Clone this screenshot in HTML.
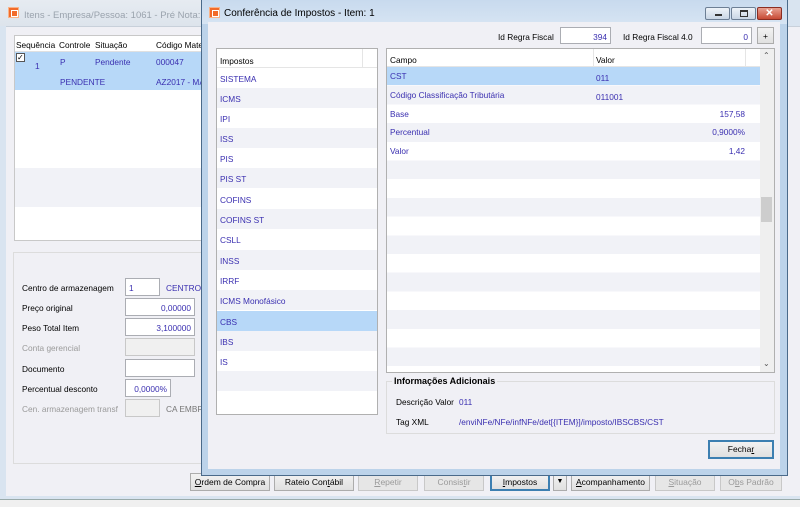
<!DOCTYPE html>
<html><head><meta charset="utf-8"><style>
*{box-sizing:border-box;margin:0;padding:0}
body{width:800px;height:507px;overflow:hidden;background:#f0f0f0;font-family:"Liberation Sans",sans-serif;font-size:8.3px;color:#000;position:relative}
.a{position:absolute}
.blue{color:#3a2fb0}
.ico{position:absolute;width:11px;height:11px;background:#f26b2a;border:1px solid #f8b48a}
.ico:after{content:"";position:absolute;left:2px;top:2px;width:5px;height:5px;border:1px solid #fff}
.inp{position:absolute;background:#fff;border:1px solid #abadb3;height:18px;padding:4px 3px;text-align:right;color:#3a2fb0}
.dis{background:#f0f0f0;border-color:#c8c8c8}
.btn{position:absolute;height:18px;border:1px solid #acacac;background:linear-gradient(#f2f2f2,#e0e0e0);text-align:center;line-height:16px;font-size:8.5px}
.btn.d{color:#9a9a9a;background:#e6e6e6;border-color:#c8c8c8}
.row{position:absolute;left:0;right:0;height:20px;padding:6px 3px;color:#3a2fb0}
</style></head><body>
<div class="a" style="left:0;top:0;width:800px;height:500px;background:#d9e4f0;border-bottom:1px solid #9aa"></div>
<div class="a" style="left:0;top:0;width:210px;height:26px;background:linear-gradient(#e6ebf1,#dde4ec)"></div>
<div class="ico" style="left:8px;top:7px"></div>
<div class="a" style="left:24px;top:10px;color:#9aa3ad;font-size:9.5px;white-space:nowrap">Itens - Empresa/Pessoa: 1061 - Pré Nota: 37</div>
<div class="a" style="left:6px;top:26px;width:794px;height:470px;background:#f0f0f5;border-top:1px solid #c8d0da"></div>
<div class="a" style="left:14px;top:35px;width:190px;height:206px;background:#fff;border:1px solid #c8c8c8"></div>
<div class="a" style="left:15px;top:36px;width:188px;height:16px;background:#fff;border-bottom:1px solid #e0e0e0"></div>
<div class="a" style="left:16px;top:40px;white-space:nowrap">Sequência</div>
<div class="a" style="left:59px;top:40px">Controle</div>
<div class="a" style="left:95px;top:40px">Situação</div>
<div class="a" style="left:156px;top:40px;white-space:nowrap">Código Mate</div>
<div class="a" style="left:15px;top:52px;width:188px;height:38px;background:#b7d8f8"></div>
<div class="a" style="left:16px;top:53px;width:9px;height:9px;border:1px solid #555;background:#fff;font-size:8px;line-height:7px">✓</div>
<div class="a blue" style="left:35px;top:61px">1</div>
<div class="a blue" style="left:60px;top:57px">P</div>
<div class="a blue" style="left:95px;top:57px">Pendente</div>
<div class="a blue" style="left:156px;top:57px">000047</div>
<div class="a blue" style="left:60px;top:77px">PENDENTE</div>
<div class="a blue" style="left:156px;top:77px;white-space:nowrap">AZ2017 - MA</div>
<div class="a" style="left:15px;top:168px;width:188px;height:39px;background:#f1f2f7"></div>
<div class="a" style="left:13px;top:252px;width:200px;height:212px;border:1px solid #dcdcdc"></div>
<div class="a" style="left:22px;top:283px">Centro de armazenagem</div>
<div class="inp" style="left:125px;top:278px;width:35px;text-align:left">1</div>
<div class="a blue" style="left:166px;top:283px">CENTRO</div>
<div class="a" style="left:22px;top:303px">Preço original</div>
<div class="inp" style="left:125px;top:298px;width:70px">0,00000</div>
<div class="a" style="left:22px;top:323px">Peso Total Item</div>
<div class="inp" style="left:125px;top:318px;width:70px">3,100000</div>
<div class="a" style="left:22px;top:343px;color:#9a9a9a">Conta gerencial</div>
<div class="inp dis" style="left:125px;top:338px;width:70px"></div>
<div class="a" style="left:22px;top:364px">Documento</div>
<div class="inp" style="left:125px;top:359px;width:70px"></div>
<div class="a" style="left:22px;top:384px">Percentual desconto</div>
<div class="inp" style="left:125px;top:379px;width:46px">0,0000%</div>
<div class="a" style="left:22px;top:404px;color:#9a9a9a;white-space:nowrap">Cen. armazenagem transf</div>
<div class="inp dis" style="left:125px;top:399px;width:35px"></div>
<div class="a" style="left:166px;top:404px;color:#777">CA EMBR</div>
<div class="btn" style="left:190px;top:473px;width:80px"><u>O</u>rdem de Compra</div>
<div class="btn" style="left:274px;top:473px;width:80px">Rateio Con<u>t</u>ábil</div>
<div class="btn d" style="left:358px;top:473px;width:60px"><u>R</u>epetir</div>
<div class="btn d" style="left:424px;top:473px;width:60px">Consis<u>t</u>ir</div>
<div class="btn" style="left:490px;top:473px;width:60px;border:2px solid #3c7fb1;line-height:14px"><u>I</u>mpostos</div>
<div class="btn" style="left:553px;top:473px;width:14px;font-size:7px">▼</div>
<div class="btn" style="left:571px;top:473px;width:79px"><u>A</u>companhamento</div>
<div class="btn d" style="left:655px;top:473px;width:60px"><u>S</u>ituação</div>
<div class="btn d" style="left:720px;top:473px;width:62px">O<u>b</u>s Padrão</div>

<div class="a" style="left:201px;top:0;width:587px;height:476px;background:#bcd3ea;border:1px solid #4a6a8a;border-top:none"></div>
<div class="a" style="left:202px;top:0;width:585px;height:24px;background:linear-gradient(#c8daee,#d6e4f3)"></div>
<div class="ico" style="left:209px;top:7px"></div>
<div class="a" style="left:224px;top:8px;font-size:10px;white-space:nowrap">Conferência de Impostos - Item: 1</div>
<div class="a" style="left:705px;top:7px;width:25px;height:13px;border:1px solid #6d7f95;border-radius:2px;background:linear-gradient(#eef3f9,#c9d6e5)"><div class="a" style="left:9px;top:6px;width:7px;height:2px;background:#333"></div></div>
<div class="a" style="left:731px;top:7px;width:25px;height:13px;border:1px solid #6d7f95;border-radius:2px;background:linear-gradient(#eef3f9,#c9d6e5)"><div class="a" style="left:8px;top:2px;width:8px;height:7px;border:1px solid #333;border-top-width:2px"></div></div>
<div class="a" style="left:757px;top:7px;width:25px;height:13px;border:1px solid #8a2d22;border-radius:2px;background:linear-gradient(#e8a192,#c74a35);color:#fff;font-weight:bold;text-align:center;line-height:11px;font-size:10px">✕</div>
<div class="a" style="left:208px;top:22px;width:572px;height:447px;background:#f0f0f5"></div>
<div class="a" style="left:498px;top:32px;white-space:nowrap">Id Regra Fiscal</div>
<div class="inp" style="left:560px;top:27px;width:51px;height:17px">394</div>
<div class="a" style="left:623px;top:32px;white-space:nowrap">Id Regra Fiscal 4.0</div>
<div class="inp" style="left:701px;top:27px;width:51px;height:17px">0</div>
<div class="btn" style="left:757px;top:27px;width:17px;height:17px">+</div>

<div class="a" style="left:216px;top:48px;width:162px;height:367px;background:#fff;border:1px solid #b0b0b0;overflow:hidden">
<div class="a" style="left:0;top:0;width:160px;height:19px;border-bottom:1px solid #e5e5e5"><div class="a" style="left:3px;top:7px">Impostos</div><div class="a" style="left:145px;top:0;width:1px;height:19px;background:#e5e5e5"></div></div>
<div class="row" style="top:19px">SISTEMA</div>
<div class="row" style="top:39px;background:#f1f2f7">ICMS</div>
<div class="row" style="top:59px">IPI</div>
<div class="row" style="top:79px;background:#f1f2f7">ISS</div>
<div class="row" style="top:99px">PIS</div>
<div class="row" style="top:119px;background:#f1f2f7">PIS ST</div>
<div class="row" style="top:140px">COFINS</div>
<div class="row" style="top:160px;background:#f1f2f7">COFINS ST</div>
<div class="row" style="top:180px">CSLL</div>
<div class="row" style="top:201px;background:#f1f2f7">INSS</div>
<div class="row" style="top:221px">IRRF</div>
<div class="row" style="top:241px;background:#f1f2f7">ICMS Monofásico</div>
<div class="row" style="top:262px;background:#b7d8f8">CBS</div>
<div class="row" style="top:282px;background:#f1f2f7">IBS</div>
<div class="row" style="top:302px">IS</div>
<div class="row" style="top:322px;background:#f1f2f7"></div>
<div class="row" style="top:343px"></div>
</div>

<div class="a" style="left:386px;top:48px;width:389px;height:325px;background:#fff;border:1px solid #b0b0b0;overflow:hidden">
<div class="a" style="left:0;top:0;width:373px;height:18px;border-bottom:1px solid #e5e5e5"><div class="a" style="left:3px;top:6px">Campo</div><div class="a" style="left:206px;top:0;width:1px;height:18px;background:#e5e5e5"></div><div class="a" style="left:209px;top:6px">Valor</div><div class="a" style="left:358px;top:0;width:1px;height:18px;background:#e5e5e5"></div></div>
<div class="a" style="left:0;top:18px;width:373px;height:300px;background:repeating-linear-gradient(#fff 0 18.7px,#f1f2f7 18.7px 37.4px)"></div>
<div class="a" style="left:0;top:18px;width:373px;height:18px;background:#b7d8f8"></div>
<div class="a blue" style="left:3px;top:22px">CST</div><div class="a blue" style="left:209px;top:24px">011</div>
<div class="a blue" style="left:3px;top:41px;white-space:nowrap">Código Classificação Tributária</div><div class="a blue" style="left:209px;top:43px">011001</div>
<div class="a blue" style="left:3px;top:60px">Base</div><div class="a blue" style="left:300px;top:60px;width:58px;text-align:right">157,58</div>
<div class="a blue" style="left:3px;top:78px">Percentual</div><div class="a blue" style="left:300px;top:78px;width:58px;text-align:right">0,9000%</div>
<div class="a blue" style="left:3px;top:97px">Valor</div><div class="a blue" style="left:300px;top:97px;width:58px;text-align:right">1,42</div>
<div class="a" style="left:373px;top:0;width:14px;height:323px;background:#efefef"><div class="a" style="left:3px;top:2px;font-size:8px;color:#555">⌃</div><div class="a" style="left:1px;top:148px;width:11px;height:25px;background:#cdcdcd"></div><div class="a" style="left:3px;top:310px;font-size:8px;color:#555">⌄</div></div>
</div>

<div class="a" style="left:386px;top:381px;width:389px;height:53px;border:1px solid #dcdcdc"></div>
<div class="a" style="left:392px;top:376px;background:#f0f0f5;padding:0 2px;font-weight:bold;font-size:9px">Informações Adicionais</div>
<div class="a" style="left:396px;top:397px">Descrição Valor</div><div class="a blue" style="left:459px;top:397px">011</div>
<div class="a" style="left:396px;top:417px">Tag XML</div><div class="a blue" style="left:459px;top:417px;white-space:nowrap">/enviNFe/NFe/infNFe/det[{ITEM}]/imposto/IBSCBS/CST</div>
<div class="btn" style="left:708px;top:440px;width:66px;height:19px;border:2px solid #3c7fb1;line-height:15px">Fecha<u>r</u></div>
</body></html>
